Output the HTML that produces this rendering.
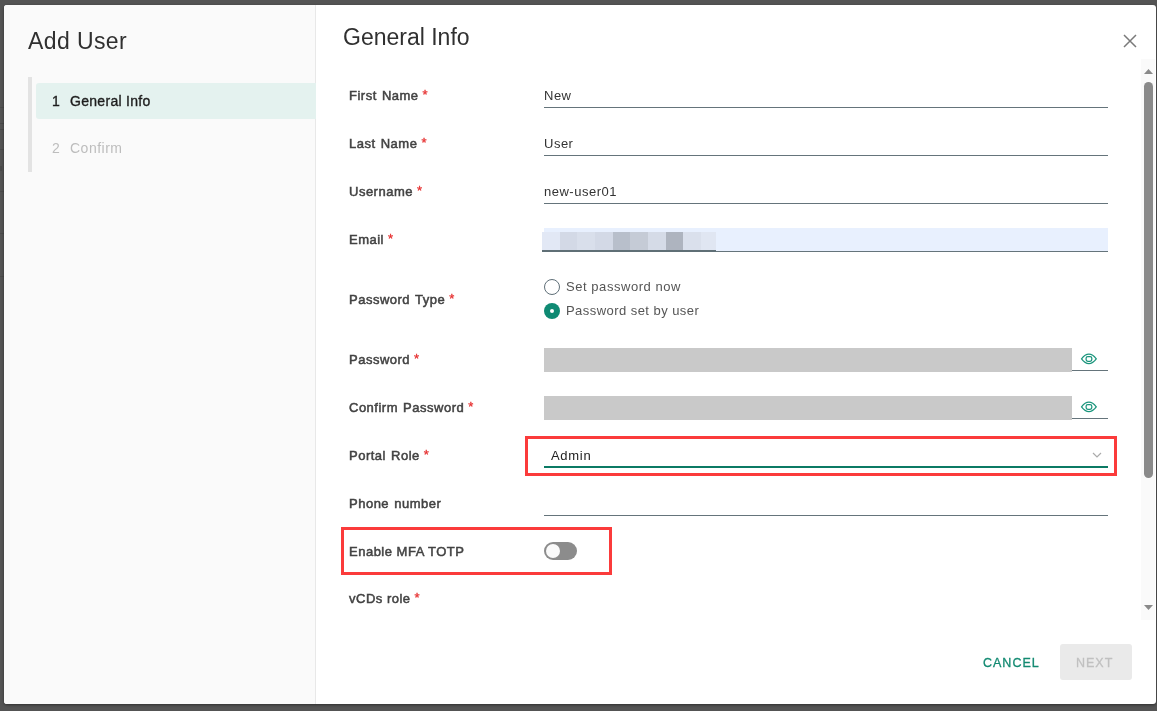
<!DOCTYPE html>
<html>
<head>
<meta charset="utf-8">
<style>
*{box-sizing:border-box;margin:0;padding:0}
html,body{width:1157px;height:711px;overflow:hidden;background:#545454;font-family:"Liberation Sans",sans-serif}
.abs{position:absolute}
#dlg{position:absolute;left:4px;top:5px;width:1152px;height:699px;background:#fff;border-radius:3px;overflow:hidden;box-shadow:0 1px 3px rgba(0,0,0,.45);transform:translateZ(0)}
#side{position:absolute;left:0;top:0;width:312px;height:699px;background:#fafafa;border-right:1px solid #e8e8e8}
.t{position:absolute;white-space:nowrap;line-height:16px}
.lbl{font-size:13px;font-weight:400;color:#424242;-webkit-text-stroke:0.5px #424242;letter-spacing:0.5px;word-spacing:1px;left:345px}
.req{color:#e62f2f;-webkit-text-stroke:0.3px #e62f2f;margin-left:4px;position:relative;top:-1px}
.val{font-size:13px;color:#333;left:540px;letter-spacing:0.5px}
.ul{position:absolute;left:540px;width:564px;height:1px;background:#65747b}
</style>
</head>
<body>

<div class="abs" style="left:0;top:107px;width:4px;height:1px;background:rgba(0,0,0,.1)"></div>
<div class="abs" style="left:0;top:123px;width:4px;height:7px;border-top:1px solid rgba(0,0,0,.12);border-bottom:1px solid rgba(0,0,0,.12)"></div>
<div class="abs" style="left:0;top:149px;width:4px;height:1px;background:rgba(0,0,0,.1)"></div>
<div class="abs" style="left:0;top:166px;width:2px;height:5px;background:rgba(0,0,0,.1)"></div>
<div class="abs" style="left:0;top:191px;width:4px;height:1px;background:rgba(0,0,0,.1)"></div>
<div class="abs" style="left:0;top:233px;width:4px;height:1px;background:rgba(0,0,0,.1)"></div>
<div class="abs" style="left:0;top:276px;width:4px;height:1px;background:rgba(0,0,0,.1)"></div>
<div id="dlg">
  <div id="side">
    <div class="t" style="left:24px;top:23px;font-size:23px;line-height:26px;color:#303030;letter-spacing:0.4px">Add User</div>
    <div class="abs" style="left:24px;top:72px;width:4px;height:95px;background:#e3e3e3"></div>
    <div class="abs" style="left:32px;top:78px;width:280px;height:36px;background:#e4f2ef;border-radius:3px 0 0 3px"></div>
    <div class="t" style="left:48px;top:88px;font-size:14px;color:#1e1e1e;-webkit-text-stroke:0.35px #1e1e1e">1</div>
    <div class="t" style="left:66px;top:88px;font-size:14px;color:#1e1e1e;-webkit-text-stroke:0.35px #1e1e1e;letter-spacing:0.3px">General Info</div>
    <div class="t" style="left:48px;top:135px;font-size:14px;color:#bdbdbd">2</div>
    <div class="t" style="left:66px;top:135px;font-size:14px;color:#bdbdbd;letter-spacing:0.5px">Confirm</div>
  </div>
  <div class="t" style="left:339px;top:19px;font-size:23px;line-height:26px;color:#303030;letter-spacing:0px">General Info</div>

  <!-- form labels -->
  <div class="t lbl" style="top:83px">First Name<span class="req">*</span></div>
  <div class="t lbl" style="top:131px">Last Name<span class="req">*</span></div>
  <div class="t lbl" style="top:179px">Username<span class="req">*</span></div>
  <div class="t lbl" style="top:227px">Email<span class="req">*</span></div>
  <div class="t lbl" style="top:287px">Password Type<span class="req">*</span></div>
  <div class="t lbl" style="top:347px">Password<span class="req">*</span></div>
  <div class="t lbl" style="top:395px">Confirm Password<span class="req">*</span></div>
  <div class="t lbl" style="top:443px">Portal Role<span class="req">*</span></div>
  <div class="t lbl" style="top:491px">Phone number</div>
  <div class="t lbl" style="top:539px;word-spacing:0">Enable MFA TOTP</div>
  <div class="t lbl" style="top:586px;word-spacing:0">vCDs role<span class="req">*</span></div>

  <!-- inputs -->
  <div class="t val" style="top:83px">New</div>
  <div class="ul" style="top:102px"></div>
  <div class="t val" style="top:131px">User</div>
  <div class="ul" style="top:150px"></div>
  <div class="t val" style="top:179px;letter-spacing:0.5px">new-user01</div>
  <div class="ul" style="top:198px"></div>
  <!-- email autofill -->
  <div class="abs" style="left:540px;top:223px;width:564px;height:24px;background:#e8f0fe;border-bottom:1px solid #65747b"></div>
  <div class="abs" style="left:538px;top:227px;height:18px;display:flex">
    <div style="width:18px;background:#e2e8f5"></div>
    <div style="width:17px;background:#d3d9e6"></div>
    <div style="width:18px;background:#d9dfeb"></div>
    <div style="width:18px;background:#d3d9e6"></div>
    <div style="width:17px;background:#b8bfcb"></div>
    <div style="width:18px;background:#c5cbd6"></div>
    <div style="width:18px;background:#d5dbe7"></div>
    <div style="width:17px;background:#aeb4bf"></div>
    <div style="width:18px;background:#dae0ec"></div>
    <div style="width:15px;background:#e0e6f2"></div>
  </div>
  <div class="abs" style="left:538px;top:245px;width:174px;height:2px;background:#5f6f76"></div>
  <!-- radios -->
  <div class="abs" style="left:540px;top:274px;width:16px;height:16px;border:1px solid #5f6f78;border-radius:50%;background:#fff"></div>
  <div class="t val" style="top:274px;left:562px;letter-spacing:0.55px;color:#555">Set password now</div>
  <div class="abs" style="left:540px;top:298px;width:16px;height:16px;border-radius:50%;background:#0f8a73"></div>
  <div class="abs" style="left:546px;top:304px;width:4px;height:4px;border-radius:50%;background:#fff"></div>
  <div class="t val" style="top:298px;left:562px;letter-spacing:0.45px;color:#555">Password set by user</div>
  <!-- password -->
  <div class="abs" style="left:540px;top:343px;width:528px;height:24px;background:#c9c9c9"></div>
  <div class="abs" style="left:1068px;top:365px;width:36px;height:1px;background:#65747b"></div>
  <div class="abs" style="left:540px;top:391px;width:528px;height:24px;background:#c9c9c9"></div>
  <div class="abs" style="left:1068px;top:413px;width:36px;height:1px;background:#65747b"></div>
  <!-- select -->
  <div class="t val" style="top:443px;left:547px;color:#222;letter-spacing:0.7px">Admin</div>
  <div class="abs" style="left:540px;top:461px;width:564px;height:2px;background:#0b7a64"></div>
  <!-- phone -->
  <div class="ul" style="top:510px"></div>
  <!-- toggle -->
  <div class="abs" style="left:540px;top:537px;width:33px;height:18px;border-radius:9px;background:#8c8c8c"></div>
  <div class="abs" style="left:542px;top:539px;width:14px;height:14px;border-radius:50%;background:#fafafa"></div>
  <!-- red highlight boxes -->
  <div class="abs" style="left:521px;top:431px;width:592px;height:40px;border:3px solid #fb3b3b"></div>
  <div class="abs" style="left:337px;top:522px;width:271px;height:48px;border:3px solid #fb3b3b"></div>

  <!-- close -->
  <svg class="abs" style="left:1119px;top:29px" width="14" height="14" viewBox="0 0 14 14"><path d="M1 1L13 13M13 1L1 13" stroke="#7a7a7a" stroke-width="1.5" fill="none"/></svg>
  <!-- scrollbar -->
  <div class="abs" style="left:1137px;top:54px;width:14px;height:561px;background:#fafafa"></div>
  <svg class="abs" style="left:1140px;top:64px" width="9" height="5" viewBox="0 0 9 5"><path d="M0 5L4.5 0L9 5Z" fill="#8a8a8a"/></svg>
  <div class="abs" style="left:1140px;top:77px;width:9px;height:396px;border-radius:4.5px;background:#8a8a8a"></div>
  <svg class="abs" style="left:1140px;top:600px" width="9" height="5" viewBox="0 0 9 5"><path d="M0 0L4.5 5L9 0Z" fill="#8a8a8a"/></svg>
  <!-- eyes -->
  <svg class="abs" style="left:1076px;top:347px" width="18" height="13" viewBox="0 0 18 13"><path d="M1.55 6.85C4 3.5 6.5 2.15 8.9 2.15S13.8 3.5 16.25 6.85C13.8 10.2 11.3 11.55 8.9 11.55S4 10.2 1.55 6.85Z" stroke="#1a957c" stroke-width="1.25" fill="none"/><rect x="6.1" y="4.6" width="5.7" height="4.7" rx="1.7" stroke="#1a957c" stroke-width="1.25" fill="none"/></svg>
  <svg class="abs" style="left:1076px;top:395px" width="18" height="13" viewBox="0 0 18 13"><path d="M1.55 6.85C4 3.5 6.5 2.15 8.9 2.15S13.8 3.5 16.25 6.85C13.8 10.2 11.3 11.55 8.9 11.55S4 10.2 1.55 6.85Z" stroke="#1a957c" stroke-width="1.25" fill="none"/><rect x="6.1" y="4.6" width="5.7" height="4.7" rx="1.7" stroke="#1a957c" stroke-width="1.25" fill="none"/></svg>
  <!-- chevron -->
  <svg class="abs" style="left:1088px;top:447px" width="10" height="7" viewBox="0 0 10 7"><path d="M1 1L5 5L9 1" stroke="#ababab" stroke-width="1.2" fill="none"/></svg>
  <!-- footer -->
  <div class="t" style="left:979px;top:650px;font-size:12.5px;color:#138a72;-webkit-text-stroke:0.3px #138a72;letter-spacing:1px">CANCEL</div>
  <div class="abs" style="left:1056px;top:639px;width:72px;height:36px;border-radius:3px;background:#eaeaea"></div>
  <div class="t" style="will-change:transform;left:1072px;top:650px;font-size:12.5px;color:#c0c0c0;-webkit-text-stroke:0.3px #c0c0c0;letter-spacing:1px">NEXT</div>
</div>
</body>
</html>
